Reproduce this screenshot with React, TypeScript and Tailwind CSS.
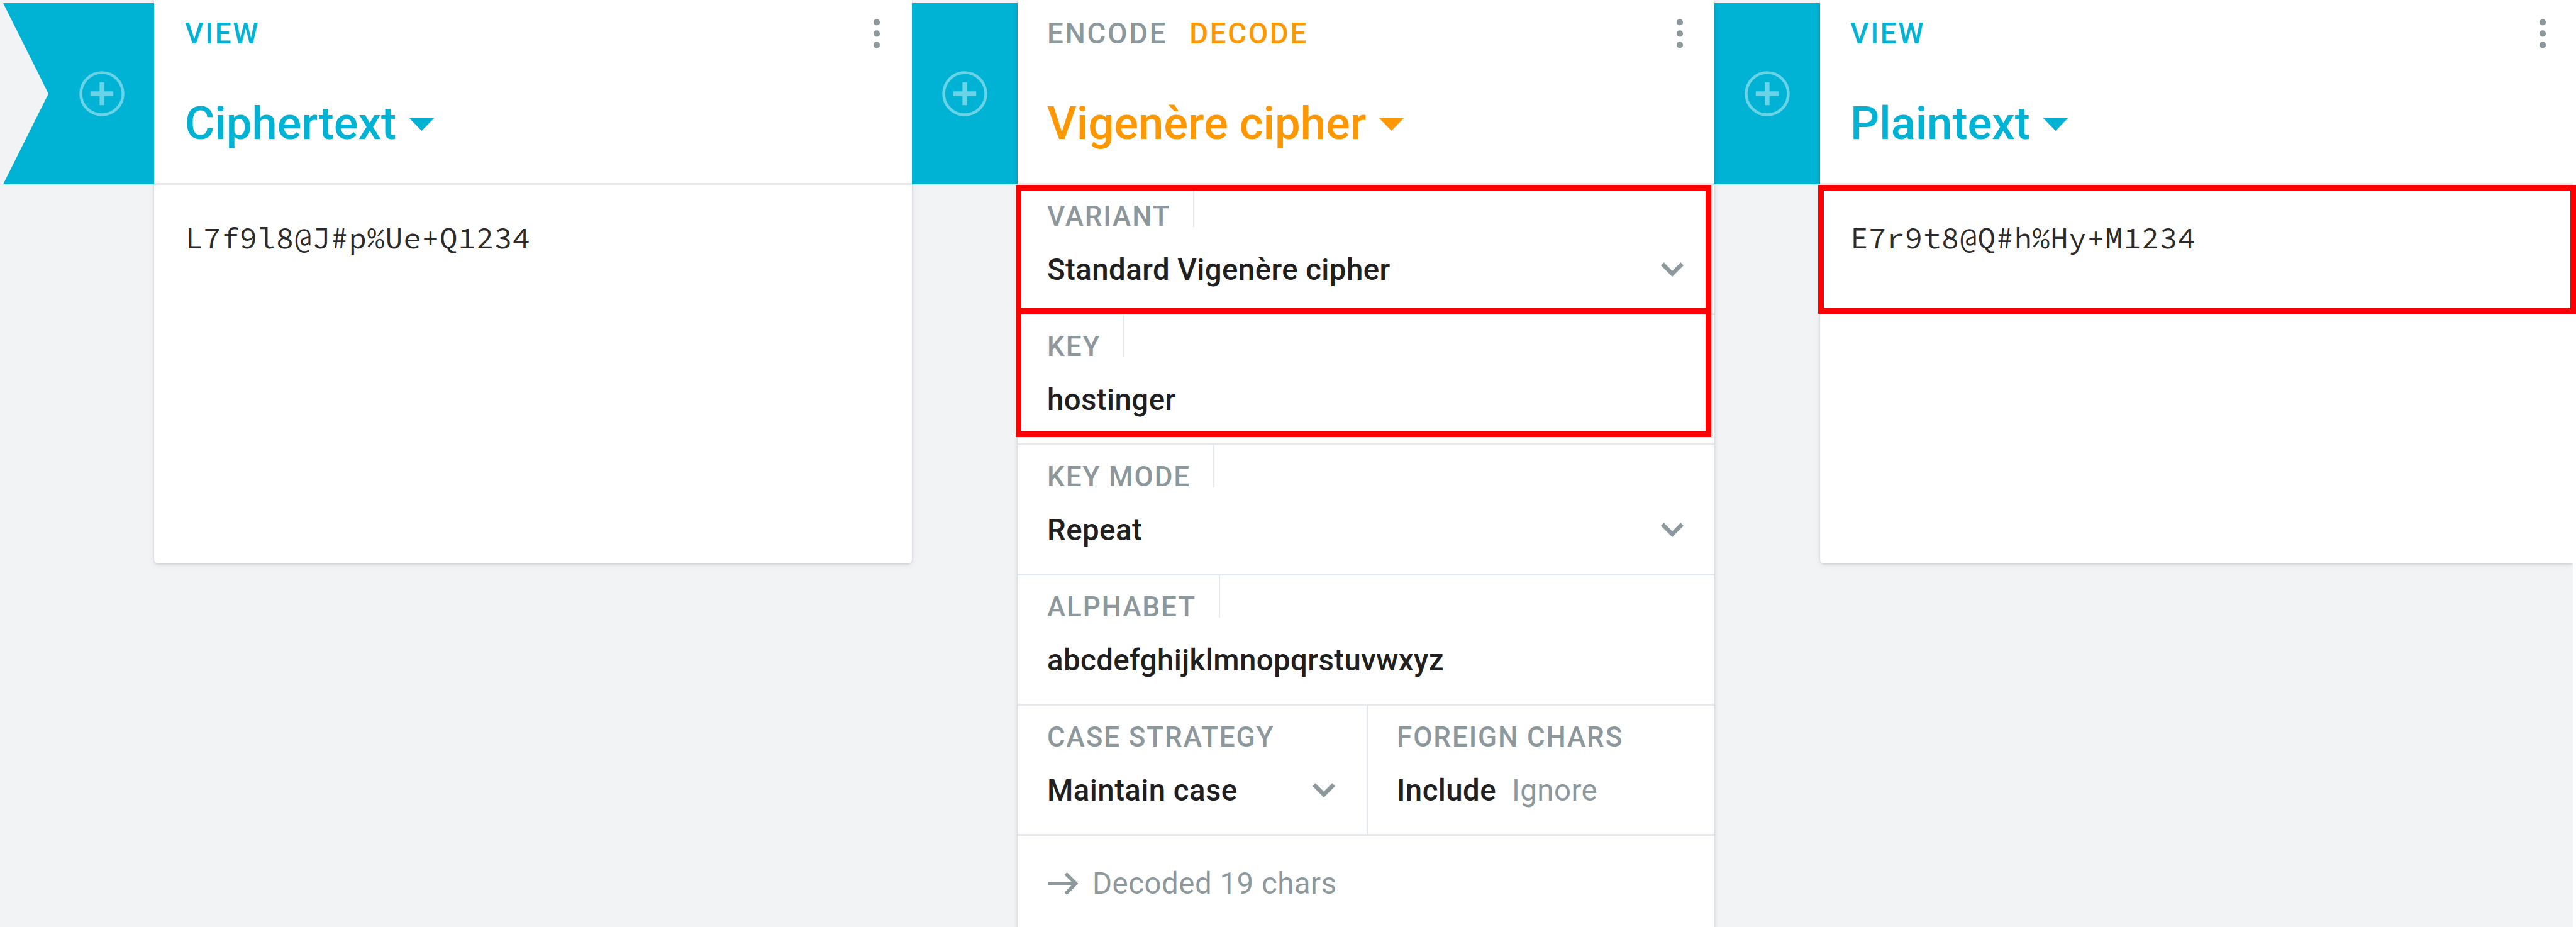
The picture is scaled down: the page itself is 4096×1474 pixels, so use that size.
import type { ReactNode } from "react";

function Connector({ notched = false }: { notched?: boolean }) {
  return (
    <div
      className={
        notched
          ? "flex h-[293px] w-[245px] shrink-0 pt-[5px] pl-[5px]"
          : "flex h-[293px] w-[168px] shrink-0 pt-[5px]"
      }
    >
      <div
        className={
          notched
            ? "flex flex-1 items-center justify-end bg-[#00b2d4] pr-[47px] [clip-path:polygon(0_0,100%_0,100%_100%,0_100%,72px_50%)]"
            : "flex flex-1 items-center justify-center bg-[#00b2d4]"
        }
      >
        <svg className="size-[72px]" viewBox="0 0 73 73" fill="none" stroke="#69d3e7">
          <circle cx="36.5" cy="36.5" r="34" strokeWidth="4.6" />
          <path d="M36.5 18V55M18 36.5H55" strokeWidth="7.4" />
        </svg>
      </div>
    </div>
  );
}

function Dots() {
  return (
    <svg className="h-[48px] w-[12px]" viewBox="0 0 12 48" fill="#8d989d">
      <circle cx="6" cy="5.4" r="5.1" />
      <circle cx="6" cy="23.4" r="5.1" />
      <circle cx="6" cy="41.4" r="5.1" />
    </svg>
  );
}

function Chevron() {
  return (
    <svg className="h-[24px] w-[36px]" viewBox="0 0 36 24" fill="none" stroke="#8d989d" strokeWidth="6.6">
      <path d="M2.3 2.6L18 18.3L33.7 2.6" />
    </svg>
  );
}

function CardHeader({
  title,
  orange = false,
  className,
  children,
}: {
  title: string;
  orange?: boolean;
  className: string;
  children: ReactNode;
}) {
  return (
    <header className={`h-[294px] border-b-[3px] border-[#e6eaee] pt-[30px] ${className}`}>
      <div className="flex items-center justify-between">
        <div className="flex gap-[35px] text-[45.6px] leading-[48px] font-medium tracking-[2.75px]">{children}</div>
        <Dots />
      </div>
      <div
        className={`mt-[77px] flex items-center gap-[21px] ${orange ? "text-[#ff9800]" : "text-[#00b2d4]"}`}
      >
        <h2 className="text-[72.4px] leading-[84px] font-medium">{title}</h2>
        <svg className="mt-[2px] h-[20px] w-[39px]" viewBox="0 0 39 20" fill="currentColor">
          <path d="M0 0H39L19.5 20Z" />
        </svg>
      </div>
    </header>
  );
}

function Label({ children, ticked = false }: { children: string; ticked?: boolean }) {
  return (
    <div
      className={`h-[67px] w-fit pt-[28px] text-[44px] leading-[44px] font-medium tracking-[1.9px] text-[#8d989d] ${
        ticked ? "border-r-2 border-[#e3e8ec] pr-[36px]" : ""
      }`}
    >
      {children}
    </div>
  );
}

function Setting({ label, value, select = false }: { label: string; value: string; select?: boolean }) {
  return (
    <div className="h-[207px] border-b-[3px] border-[#e6eaee] pr-[49px] pl-[47px]">
      <Label ticked>{label}</Label>
      <div className="mt-[38px] flex items-center justify-between text-[47.4px] leading-[60px] font-medium tracking-[0.42px]">
        <span>{value}</span>
        {select && <Chevron />}
      </div>
    </div>
  );
}

const cardShadow = "shadow-[0_2px_8px_rgba(30,40,50,0.10),0_1px_3px_rgba(30,40,50,0.12)]";
const monoText = "font-['Source_Code_Pro','Noto_Sans_Mono',monospace] text-[47.4px] leading-[60px] tracking-[0.5px] text-[#2b2b2b]";

export default function App() {
  return (
    <main className="flex h-[1474px] w-[4096px] items-start overflow-hidden bg-[#f2f3f5] font-[Roboto,sans-serif] whitespace-nowrap text-[#202020]">
      <Connector notched />

      <section className={`h-[896px] w-[1205px] shrink-0 rounded-b-[6px] bg-white ${cardShadow}`}>
        <CardHeader title="Ciphertext" className="pr-[50px] pl-[49px]">
          <span className="text-[#00b2d4]">VIEW</span>
        </CardHeader>
        <p className={`pt-[54px] pl-[49px] ${monoText}`}>L7f9l8@J#p%Ue+Q1234</p>
      </section>

      <Connector />

      <section className={`relative h-[1500px] w-[1108px] shrink-0 bg-white ${cardShadow}`}>
        <CardHeader title="Vigenère cipher" orange className="pr-[49px] pl-[47px]">
          <span className="text-[#8d989d]">ENCODE</span>
          <span className="text-[#ff9800]">DECODE</span>
        </CardHeader>
        <Setting label="VARIANT" value="Standard Vigenère cipher" select />
        <Setting label="KEY" value="hostinger" />
        <Setting label="KEY MODE" value="Repeat" select />
        <Setting label="ALPHABET" value="abcdefghijklmnopqrstuvwxyz" />
        <div className="flex h-[207px] border-b-[3px] border-[#e6eaee] text-[47.4px] leading-[60px] tracking-[0.42px]">
          <div className="w-[557px] border-r-2 border-[#e3e8ec] pr-[50px] pl-[47px]">
            <Label>CASE STRATEGY</Label>
            <div className="mt-[38px] flex items-center justify-between font-medium">
              <span>Maintain case</span>
              <Chevron />
            </div>
          </div>
          <div className="pl-[46px]">
            <Label>FOREIGN CHARS</Label>
            <div className="mt-[38px] flex gap-[25px]">
              <span className="font-medium">Include</span>
              <span className="text-[#8d989d]">Ignore</span>
            </div>
          </div>
        </div>
        <footer className="flex items-center gap-[23px] pt-[46px] pl-[48px] text-[47.4px] leading-[60px] tracking-[0.5px] text-[#8d989d]">
          <svg className="h-[36px] w-[48px]" viewBox="0 0 48 36" fill="none" stroke="currentColor" strokeWidth="5.6">
            <path d="M0 18H44M28.5 2L44.5 18L28.5 34" />
          </svg>
          <span>Decoded 19 chars</span>
        </footer>
        <div className="absolute top-[294px] left-[-3px] h-[205px] w-[1106px] border-[9px] border-[#ff0000]" />
        <div className="absolute top-[490px] left-[-3px] h-[205px] w-[1106px] border-[9px] border-[#ff0000]" />
      </section>

      <Connector />

      <section className={`relative h-[896px] w-[1197px] shrink-0 rounded-bl-[6px] bg-white ${cardShadow}`}>
        <CardHeader title="Plaintext" className="pr-[42px] pl-[48px]">
          <span className="text-[#00b2d4]">VIEW</span>
        </CardHeader>
        <p className={`pt-[54px] pl-[48px] ${monoText}`}>E7r9t8@Q#h%Hy+M1234</p>
        <div className="absolute top-[294px] left-[-3px] z-10 h-[205px] w-[1205px] border-[9px] border-[#ff0000]" />
      </section>

      <div className="relative h-full w-[5px] shrink-0 bg-white" />
    </main>
  );
}
